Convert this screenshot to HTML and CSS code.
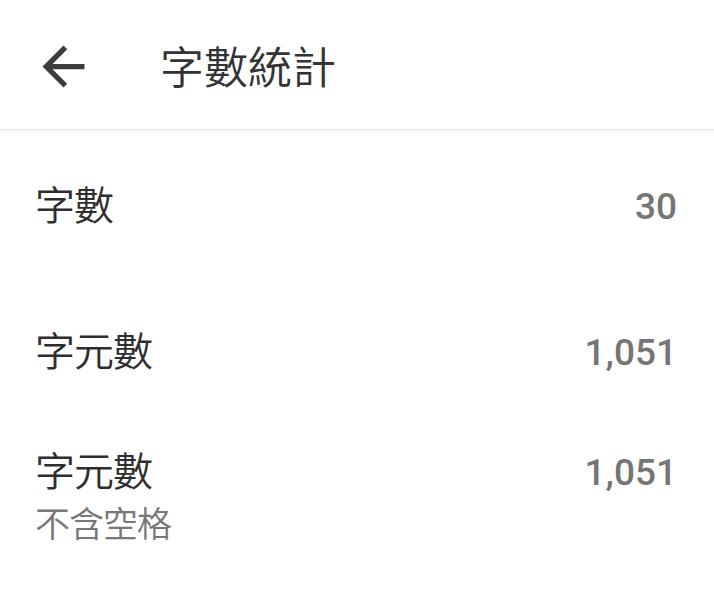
FILE: index.html
```html
<!DOCTYPE html>
<html lang="zh-Hant">
  <head>
    <meta charset="UTF-8" />
    <meta name="viewport" content="width=device-width, initial-scale=1.0" />
    <title>字數統計</title>
    <link rel="stylesheet" href="styles.css">
  </head>
  <body>
    <header class="toolbar">
      <button class="back-btn" aria-label="返回">
        <svg viewBox="0 0 24 24" width="63" height="63">
          <path d="M20 11H7.83l5.59-5.59L12 4l-8 8 8 8 1.41-1.41L7.83 13H20v-2z" fill="#3c3c3c" />
        </svg>
      </button>
      <h1 class="title">字數統計</h1>
    </header>
    <ul class="stats">
      <li class="stat stat-words">
        <div class="stat-text">
          <span class="stat-label">字數</span>
        </div>
        <span class="stat-value">30</span>
      </li>
      <li class="stat stat-chars">
        <div class="stat-text">
          <span class="stat-label">字元數</span>
        </div>
        <span class="stat-value">1,051</span>
      </li>
      <li class="stat stat-nospace">
        <div class="stat-text">
          <span class="stat-label">字元數</span>
          <span class="stat-sub">不含空格</span>
        </div>
        <span class="stat-value">1,051</span>
      </li>
    </ul>
  </body>
</html>
```

FILE: styles.css
```css
body {
  margin: 0;
  background-color: #fff;
  font-family: Roboto, "Noto Sans CJK TC", sans-serif;
  color: #333;
}
.toolbar {
  display: flex;
  align-items: center;
  height: 130px;
  box-sizing: border-box;
  padding-left: 32px;
  border-bottom: 1px solid #e6e6e6;
  box-shadow: 0 2px 3px rgba(0, 0, 0, 0.05);
}
.back-btn {
  display: flex;
  padding: 0;
  border: none;
  background: none;
  cursor: pointer;
  margin-top: 4px;
}
.title {
  margin: 0 0 0 65px;
  font-size: 44px;
  font-weight: 350;
  color: #333;
}
.stats {
  list-style: none;
  margin: 0;
  padding: 0 37px 0 35px;
}
.stat {
  display: flex;
  justify-content: space-between;
  align-items: flex-start;
}
.stat-words {
  margin-top: 49px;
}
.stat-chars {
  margin-top: 90px;
}
.stat-nospace {
  margin-top: 64px;
}
.stat-text {
  display: flex;
  flex-direction: column;
}
.stat-label {
  font-size: 40px;
  line-height: 56px;
  font-weight: 350;
  color: #2e2e2e;
  letter-spacing: -1px;
}
.stat-sub {
  font-size: 35px;
  line-height: 50px;
  font-weight: 350;
  color: #777;
  letter-spacing: -1px;
}
.stat-value {
  font-size: 37px;
  line-height: 56px;
  font-weight: 500;
  color: #757575;
}
```
